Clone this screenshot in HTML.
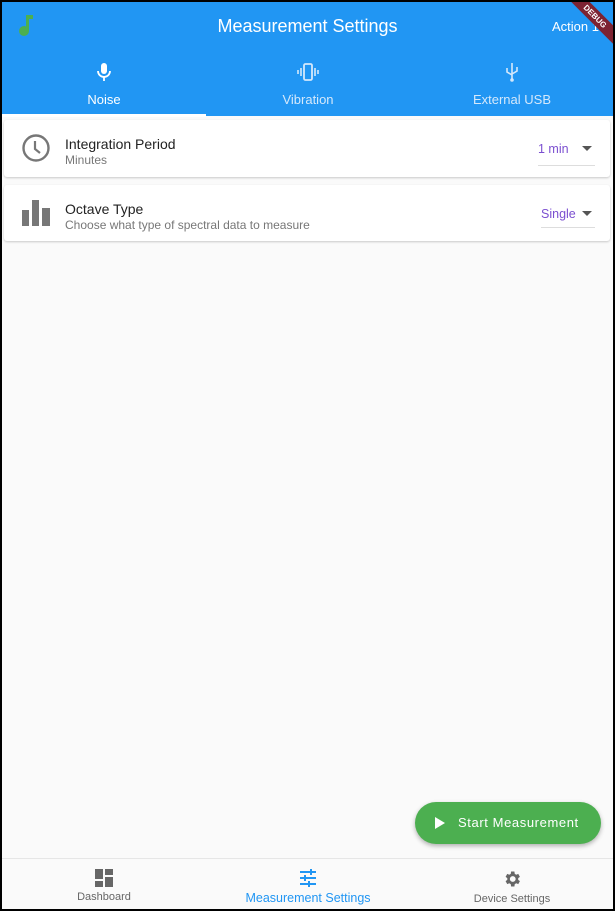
<!DOCTYPE html>
<html><head><style>
*{margin:0;padding:0;box-sizing:border-box}
body{width:615px;height:911px;background:#000;font-family:"Liberation Sans",sans-serif;overflow:hidden;position:relative}
.frame{position:absolute;left:2px;top:2px;width:611px;height:907px;background:#fafafa;overflow:hidden}
.bar{position:absolute;left:0;top:0;width:611px;height:114px;background:#2196f3;color:#fff}
.title{position:absolute;left:0;width:611px;top:14px;text-align:center;font-size:18px}
.act{position:absolute;right:14px;top:17px;font-size:13px}
.ribbon{position:absolute;right:-22px;top:8px;width:80px;height:13px;background:#7d2332;transform:rotate(45deg);color:#fff;font-size:8px;font-weight:bold;text-align:center;line-height:13px}
.tab{position:absolute;top:60px;width:204px;text-align:center;font-size:13px}
.tab svg{display:block;margin:0 auto 10px}
.ind{position:absolute;left:0;top:112px;width:204px;height:3px;background:#fff}
.card{position:absolute;left:2px;width:606px;background:#fff;border-radius:3px;box-shadow:0 1px 2px rgba(0,0,0,.2)}
.h{position:absolute;left:61px;font-size:14px;color:#222}
.s{position:absolute;left:61px;font-size:12px;color:#777}
.dd{position:absolute;color:#7b4fd0;font-size:12.5px}
.ul{position:absolute;height:1px;background:#ddd}
.fab{position:absolute;left:413px;top:800px;width:186px;height:42px;border-radius:21px;background:#4caf50;color:#fff;font-size:13px;letter-spacing:.6px;box-shadow:0 2px 5px rgba(0,0,0,.3)}
.nav{position:absolute;left:0;top:856px;width:611px;height:51px;background:#fafafa;border-top:1px solid #e6e6e6}
.ni{position:absolute;top:0;width:204px;text-align:center;font-size:11px;color:#666}
.ni svg{display:block;margin:10px auto 4px}
</style></head><body><div class="frame">
<div class="bar">
<svg style="position:absolute;left:16px;top:12px" width="16" height="22" viewBox="0 0 16 22"><rect x="8" y="1" width="3" height="16" fill="#4caf50"/><rect x="8" y="1" width="7" height="4" fill="#4caf50"/><circle cx="6" cy="17" r="5" fill="#4caf50"/></svg>
<div class="title">Measurement Settings</div>
<div class="act">Action 1</div>
<div class="ribbon">DEBUG</div>
<div class="tab" style="left:0"><svg width="16" height="20" viewBox="0 0 16 20"><rect x="5" y="1" width="6" height="11" rx="3" fill="#fff"/><path d="M2 9a6 6 0 0 0 12 0" stroke="#fff" stroke-width="1.8" fill="none"/><rect x="7.1" y="14" width="1.8" height="5" fill="#fff"/></svg>Noise</div>
<div class="tab" style="left:204px;color:#d4e8fb"><svg width="22" height="20" viewBox="0 0 22 20"><rect x="7" y="2" width="8" height="16" rx="1.5" stroke="#d4e8fb" stroke-width="1.8" fill="none"/><path d="M4 6v8M1 8v4M18 6v8M21 8v4" stroke="#d4e8fb" stroke-width="1.6"/></svg>Vibration</div>
<div class="tab" style="left:408px;color:#d4e8fb"><svg width="16" height="20" viewBox="0 0 16 20"><path d="M8 1v18M3 6v4l5 3M13 5v4l-5 3" stroke="#d4e8fb" stroke-width="1.6" fill="none"/><circle cx="8" cy="18" r="1.8" fill="#d4e8fb"/></svg>External USB</div>
<div class="ind"></div>
</div>
<div class="card" style="top:118px;height:57px">
<svg style="position:absolute;left:17px;top:13px" width="30" height="30" viewBox="0 0 30 30"><circle cx="15" cy="15" r="12.5" stroke="#777" stroke-width="2.4" fill="none"/><path d="M14 8v8l5 4" stroke="#777" stroke-width="2.2" fill="none"/></svg>
<div class="h" style="top:16px">Integration Period</div>
<div class="s" style="top:33px">Minutes</div>
<div class="dd" style="left:534px;top:22px">1 min</div>
<svg style="position:absolute;left:578px;top:26px" width="10" height="6"><path d="M0 0h10L5 5z" fill="#555"/></svg>
<div class="ul" style="left:534px;top:45px;width:57px"></div>
</div>
<div class="card" style="top:183px;height:56px">
<svg style="position:absolute;left:18px;top:13px" width="30" height="28"><rect x="0" y="12" width="7" height="16" fill="#777"/><rect x="10" y="2" width="7" height="26" fill="#777"/><rect x="20" y="10" width="8" height="18" fill="#777"/></svg>
<div class="h" style="top:16px">Octave Type</div>
<div class="s" style="top:33px">Choose what type of spectral data to measure</div>
<div class="dd" style="left:537px;top:22px">Single</div>
<svg style="position:absolute;left:578px;top:26px" width="10" height="6"><path d="M0 0h10L5 5z" fill="#555"/></svg>
<div class="ul" style="left:537px;top:42px;width:54px"></div>
</div>
<div class="fab"><svg style="position:absolute;left:20px;top:15px" width="10" height="12"><path d="M0 0l10 6-10 6z" fill="#fff"/></svg><span style="position:absolute;left:43px;top:13px">Start Measurement</span></div>
<div class="nav">
<div class="ni" style="left:0"><svg width="18" height="18" viewBox="0 0 18 18"><rect x="0" y="0" width="8" height="10" fill="#666"/><rect x="10" y="0" width="8" height="6" fill="#666"/><rect x="0" y="12" width="8" height="6" fill="#666"/><rect x="10" y="8" width="8" height="10" fill="#666"/></svg>Dashboard</div>
<div class="ni" style="left:204px;color:#2196f3;font-size:12.5px"><svg width="18" height="18" viewBox="0 0 18 18"><path d="M1 3h16M1 9h16M1 15h16" stroke="#2196f3" stroke-width="2"/><path d="M12 0v6M6 6v6M10 12v6" stroke="#2196f3" stroke-width="2"/></svg>Measurement Settings</div>
<div class="ni" style="left:408px"><svg width="20" height="20" viewBox="0 0 24 24"><path fill="#666" d="M19.4 13a7.5 7.5 0 0 0 0-2l2.1-1.6-2-3.5-2.5 1a7 7 0 0 0-1.7-1L14.9 3h-4l-.4 2.9a7 7 0 0 0-1.7 1l-2.5-1-2 3.5L6.4 11a7.5 7.5 0 0 0 0 2l-2.1 1.6 2 3.5 2.5-1a7 7 0 0 0 1.7 1l.4 2.9h4l.4-2.9a7 7 0 0 0 1.7-1l2.5 1 2-3.5zM12.9 15.5a3.5 3.5 0 1 1 0-7 3.5 3.5 0 0 1 0 7z"/></svg>Device Settings</div>
</div>
</div></body></html>
